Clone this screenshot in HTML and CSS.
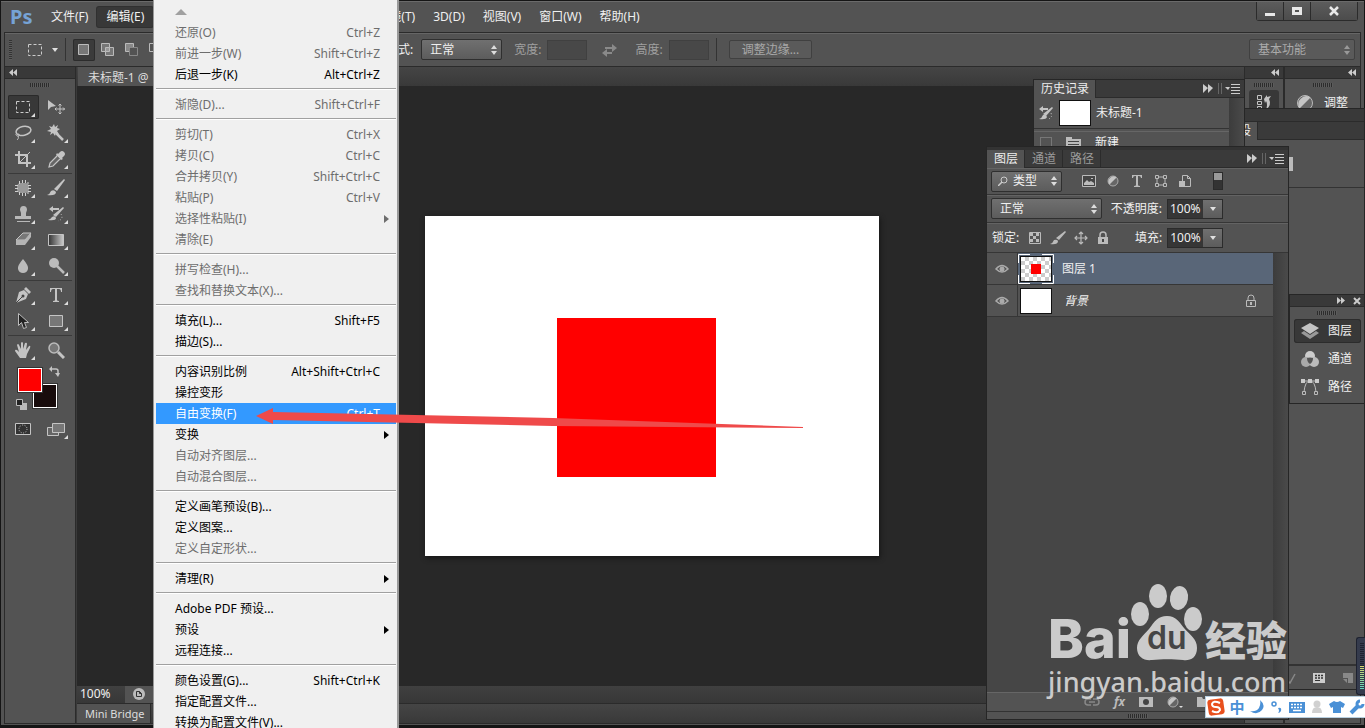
FILE: index.html
```
<!DOCTYPE html>
<html lang="zh-CN">
<head>
  <meta charset="UTF-8">
  <meta name="viewport" content="width=device-width, initial-scale=1.0">
  <title>Photoshop</title>
  <link rel="stylesheet" href="styles.css">
</head>
<body>
  <div class="app">
    <!-- Menu bar -->
    <header class="menubar">
      <span class="logo">Ps</span>
      <nav class="menus">
        <button class="menu-btn">文件(F)</button>
        <button class="menu-btn active">编辑(E)</button>
      </nav>
      <nav class="menus menus-rest">
        <button class="menu-btn">滤镜(T)</button>
        <button class="menu-btn">3D(D)</button>
        <button class="menu-btn">视图(V)</button>
        <button class="menu-btn">窗口(W)</button>
        <button class="menu-btn">帮助(H)</button>
      </nav>
      <div class="win-btns">
        <button class="win-btn" aria-label="最小化"><svg width="12" height="12"><path d="M1 8h10v3H1z" fill="#e8e8e8"/></svg></button>
        <button class="win-btn" aria-label="最大化"><svg width="12" height="12"><path d="M2.500 3.500h7v5h-7z" fill="none" stroke="#e8e8e8" stroke-width="3"/></svg></button>
        <button class="win-btn wide" aria-label="关闭"><svg width="12" height="12"><path d="M2 2l8 8M10 2l-8 8" stroke="#e8e8e8" stroke-width="2.500"/></svg></button>
      </div>
    </header>

    <!-- Options bar -->
    <div class="options">
      <span class="vgrip"></span>
      <svg class="opt-tool" width="16" height="16"><path d="M1.500 2.500h13v11h-13z" fill="none" stroke="#ccc" stroke-dasharray="3 2"/></svg>
      <svg class="opt-caret" width="6" height="4"><path d="M0 0h6l-3 4z" fill="#e0e0e0"/></svg>
      <span class="divider"></span>
      <div class="sel-modes">
        <button class="mode active" aria-label="新选区"><svg width="14" height="14"><path d="M1.500 1.500h10v10h-10z" fill="#777" stroke="#bbb"/></svg></button>
        <button class="mode" aria-label="添加到选区"><svg width="14" height="14"><path d="M.5.5h8v4h4v8h-8v-4h-4z" fill="#777" stroke="#bbb"/><path d="M4.500 8.500v-4h4v4z" fill="#999" stroke="#bbb"/></svg></button>
        <button class="mode" aria-label="从选区减去"><svg width="14" height="14"><path d="M.5.5h8v4h-4v4h-4z" fill="#888" stroke="#bbb"/><path d="M4.500 4.500h8v8h-8z" fill="none" stroke="#888"/></svg></button>
        <button class="mode" aria-label="与选区交叉"><svg width="14" height="14"><path d="M.5.5h8v8h-8z" fill="none" stroke="#bbb"/><path d="M4.500 4.500h8v8h-8z" fill="none" stroke="#bbb"/></svg></button>
      </div>
      <div class="opt-fields">
        <label for="style">样式:</label>
        <select id="style" class="select style-select"><option>正常</option></select>
        <label for="w" class="dim">宽度:</label>
        <input id="w" class="opt-input" type="text" disabled>
        <svg class="swap" width="16" height="14"><path d="M4 4h7V1l5 4-5 4V6H4z" fill="#8a8a8a"/><path d="M11 9H6V6l-5 4 5 4v-3h5z" fill="#8a8a8a"/></svg>
        <label for="h" class="dim">高度:</label>
        <input id="h" class="opt-input" type="text" disabled>
        <span class="divider"></span>
        <button class="refine" disabled>调整边缘...</button>
      </div>
      <select class="select workspace-select" aria-label="工作区"><option>基本功能</option></select>
    </div>

    <div class="workspace">
      <!-- Toolbox -->
      <aside class="toolbox">
        <div class="dock-head left"><svg width="8" height="7"><path d="M4 0v7L0 3.500zM8 0v7L4 3.500z" fill="#ccc"/></svg></div>
        <span class="grip"></span>
        <div class="tools">
          <button class="tool more active" aria-label="矩形选框"><svg width="18" height="18"><path d="M2.500 3.500h13v11h-13z" fill="none" stroke="#ccc" stroke-dasharray="3 2"/></svg></button>
          <button class="tool" aria-label="移动"><svg width="18" height="18"><path d="M1 2l8 6-5 1-3 3z" fill="#c4c4c4"/><path d="M13 6v10M8 11h10M11.500 7.500L13 6l1.500 1.500M11.500 14.500L13 16l1.500-1.500M9.500 9.500L8 11l1.500 1.500M16 9.500l1.500 1.500-1.500 1.500" fill="none" stroke="#c4c4c4"/></svg></button>
          <button class="tool more" aria-label="套索"><svg width="18" height="18"><ellipse cx="9.500" cy="7" rx="7.500" ry="4.500" fill="none" stroke="#c4c4c4" stroke-width="1.500" transform="rotate(-12 9 7)"/><path d="M3 9c-2 1-1 3 1 3s2-2 0-2M4 12c1 2 0 3-1 4" fill="none" stroke="#c4c4c4"/></svg></button>
          <button class="tool more" aria-label="魔棒"><svg width="18" height="18"><path d="M7 0l1 3 3-2-1 3 3 1-3 2 2 3-3-1-1 3-2-3-3 2 1-3-4-1 4-2-2-3 3 1z" fill="#c4c4c4"/><path d="M9 9l7 7" stroke="#c4c4c4" stroke-width="2.500"/></svg></button>
          <button class="tool more" aria-label="裁剪"><svg width="18" height="18"><path d="M5 1v12h12M1 5h12v12" fill="none" stroke="#c4c4c4" stroke-width="2"/><path d="M6 12L16 2" stroke="#c4c4c4"/></svg></button>
          <button class="tool more" aria-label="吸管"><svg width="18" height="18"><path d="M11 4l2-2q2-2 4 0t0 4l-2 2 1 1-2 1-5-5 1-2z" fill="#c4c4c4"/><path d="M10 6l-7 7-1 4 4-1 7-7" fill="#666" stroke="#c4c4c4" stroke-width="1.200"/></svg></button>
          <hr class="tool-sep">
          <button class="tool more" aria-label="修复画笔"><svg width="18" height="18"><rect x="3" y="4" width="12" height="10" rx="4" fill="#999"/><path d="M5.500 2v3M8.500 1v3M11.500 1v3M14 3v2M5.500 13v3M8.500 14v3M11.500 14v3M14 13v2M1 6.500h3M1 9.500h3M1 12.500h3M14 6.500h3M14 9.500h3M14 12.500h3" stroke="#d0d0d0"/></svg></button>
          <button class="tool more" aria-label="画笔"><svg width="18" height="18"><path d="M17 0l1 1-8 11-3-2z" fill="#c4c4c4"/><path d="M0 16q3-1 4-4 3-2 5 1 0 4-9 3z" fill="#c4c4c4"/></svg></button>
          <button class="tool more" aria-label="图章"><svg width="18" height="18"><path d="M7 8l-1-3q0-4 3.500-4T13 5l-1 3v3h5v3H1v-3h6zM3 16h13v1H3z" fill="#b8b8b8"/></svg></button>
          <button class="tool more" aria-label="历史画笔"><svg width="18" height="18"><path d="M16 2l1 1-8 9-3-2z" fill="#c4c4c4"/><path d="M1 15q3-1 4-3 3-2 4 1 0 3-8 2z" fill="#c4c4c4"/><path d="M2 4l4-3v2h6v2H6v2z" fill="#c4c4c4"/><path d="M14 9q3 5-3 7" fill="none" stroke="#c4c4c4" stroke-dasharray="1 2"/></svg></button>
          <button class="tool more" aria-label="橡皮擦"><svg width="18" height="18"><path d="M9 2h8l-6 7H2z" fill="#777" stroke="#c4c4c4"/><path d="M2 9h9v5H2zM11 9l6-7v4l-6 8z" fill="#b4b4b4"/></svg></button>
          <button class="tool more" aria-label="渐变"><svg width="18" height="18"><defs><linearGradient id="gr"><stop offset="0" stop-color="#333"/><stop offset="1" stop-color="#ccc"/></linearGradient></defs><path d="M1.500 3.500h15v11h-15z" fill="url(#gr)" stroke="#c4c4c4"/></svg></button>
          <button class="tool more" aria-label="模糊"><svg width="18" height="18"><path d="M9 2q6 7 5 10-1 4-5 4t-5-4Q3 9 9 2z" fill="#bbb"/></svg></button>
          <button class="tool more" aria-label="减淡"><svg width="18" height="18"><circle cx="7" cy="6" r="5" fill="#bbb"/><path d="M10 9l7 7" stroke="#bbb" stroke-width="2.500"/></svg></button>
          <hr class="tool-sep">
          <button class="tool more" aria-label="钢笔"><svg width="18" height="18"><path d="M12 1l5 5-2 2-5-5z" fill="#c4c4c4"/><path d="M10 4l4 4-2 5-10 4L5 6z" fill="#c4c4c4"/><path d="M2 17l6-6" stroke="#444"/><circle cx="9" cy="10" r="1.500" fill="#444"/></svg></button>
          <button class="tool more" aria-label="文字"><svg width="18" height="18"><path d="M3 2h12v4h-1q0-3-2-3h-2v11q0 1 2 1v1H6v-1q2 0 2-1V3H6Q4 3 4 6H3z" fill="#c4c4c4"/></svg></button>
          <button class="tool more" aria-label="路径选择"><svg width="18" height="18"><path d="M4.500 1.500v12l3-3 2 6 3-1-2-5h4z" fill="#222" stroke="#bbb"/></svg></button>
          <button class="tool more" aria-label="矩形"><svg width="18" height="18"><path d="M2.500 3.500h13v11h-13z" fill="#777" stroke="#c4c4c4"/></svg></button>
          <hr class="tool-sep">
          <button class="tool more" aria-label="抓手"><svg width="18" height="18"><path d="M6 17L1 10q0-2 2-1l2 2L3 4q1-2 2 0l2 4V2q1-2 2 0v6l2-6q2-1 2 1l-1 6 3-4q2-1 1 2l-3 6-1 4z" fill="#c4c4c4"/></svg></button>
          <button class="tool" aria-label="缩放"><svg width="18" height="18"><circle cx="7" cy="7" r="5" fill="#777" stroke="#bbb" stroke-width="1.500"/><path d="M11 11l6 6" stroke="#c4c4c4" stroke-width="3"/></svg></button>
        </div>
        <div class="swatches">
          <span class="swatch bg"></span>
          <span class="swatch fg"></span>
          <svg class="switch" width="11" height="11"><path d="M2 3h5q2 0 2 2v4" fill="none" stroke="#c4c4c4" stroke-width="1.500"/><path d="M0 3l3-3v6zM6 7h5l-2 4z" fill="#c4c4c4"/></svg>
          <svg class="default" width="11" height="11"><path d="M4 4h7v7H4z" fill="#bbb"/><path d="M.5.5h6v6h-6z" fill="#222" stroke="#bbb"/></svg>
        </div>
        <div class="tools modes">
          <button class="tool" aria-label="快速蒙版"><svg width="18" height="18"><path d="M1.500 3.500h15v11h-15z" fill="#333" stroke="#c4c4c4"/><circle cx="9" cy="9" r="4" fill="none" stroke="#ccc" stroke-dasharray="1 1.500"/></svg></button>
          <button class="tool more" aria-label="屏幕模式"><svg width="18" height="18"><path d="M.5 7.500h11v8H.5z" fill="#666" stroke="#c4c4c4"/><path d="M5.500 3.500h12v9h-12z" fill="#777" stroke="#c4c4c4"/></svg></button>
        </div>
      </aside>

      <!-- Document -->
      <main class="document">
        <div class="doc-tabs"><span class="doc-tab">未标题-1 @</span></div>
        <div class="stage">
          <div class="canvas"><div class="red-box"></div></div>
        </div>
        <div class="status">
          <span class="zoom">100%</span>
          <svg class="status-icon" width="12" height="12"><circle cx="6" cy="6" r="6" fill="#bbb"/><path d="M3.500 3.500h3l2 2v3h-5zM6.500 3.500v2h2" fill="none" stroke="#333"/></svg>
        </div>
        <div class="bottom-tabs"><span class="bridge-tab">Mini Bridge</span></div>
      </main>

      <!-- Collapsed dock -->
      <aside class="dock">
        <div class="dock-col narrow">
          <div class="dock-head"><svg width="8" height="7"><path d="M4 0v7L0 3.500zM8 0v7L4 3.500z" fill="#ccc"/></svg></div>
          <span class="grip"></span>
          <button class="dock-btn active" aria-label="历史记录"><svg width="16" height="16"><path d="M1.500.5h4v4h-4zM1.500 6.500h4v3h-4zM1.500 11.500h4v4h-4z" fill="none" stroke="#c4c4c4"/><path d="M8 4l3-4v2l4-1-2 3q3 6-3 11 2-6 0-9l-1 2z" fill="#c4c4c4"/></svg></button>
        </div>
        <div class="dock-col">
          <div class="dock-head"><svg width="8" height="7"><path d="M4 0v7L0 3.500zM8 0v7L4 3.500z" fill="#ccc"/></svg></div>
          <span class="grip"></span>
          <button class="dock-btn"><svg width="18" height="18"><circle cx="9" cy="9" r="7.500" fill="#666" stroke="#bbb"/><path d="M3.500 14.500l11-11A8 8 0 0 0 3.500 14.500z" fill="#c4c4c4"/></svg>调整</button>
        </div>
      </aside>
    </div>
  </div>

  <!-- Presets window -->
  <section class="window presets">
    <div class="window-cap"></div>
    <div class="tabs"><button class="tab active">预设</button></div>
    <div class="presets-top"><span class="preset-slot"></span></div>
    <div class="presets-body"></div>
    <div class="presets-foot">
      <svg width="10" height="12"><path d="M1 8l3 3 5-9" fill="none" stroke="#888" stroke-width="1.500"/></svg>
      <svg width="12" height="12"><path d="M0 1h12v10H0z" fill="#ccc"/><path d="M2 3.500h8M2 6h8" stroke="#333" stroke-width="1.500" stroke-dasharray="2 1"/><path d="M2 8.500h5" stroke="#333"/></svg>
      <svg width="12" height="12"><path d="M1 1h10v10H6V6H1z" fill="#888"/><path d="M1 7l4 4V7z" fill="#888"/></svg>
    </div>
  </section>

  <!-- History window -->
  <section class="window history">
    <div class="tabs">
      <button class="tab active">历史记录</button>
      <span class="tabs-end"><svg width="22" height="11"><path d="M0 1l5 4-5 5zM5 1l5 4-5 5z" fill="#ccc"/><path d="M15.500 0v11M18.500 0v11" stroke="#666"/></svg><svg width="16" height="10"><path d="M0 3h5L3 6z" fill="#ccc"/><path d="M6 .5h9M6 3.500h9M6 6.500h9M6 9.500h9" stroke="#ccc"/></svg></span>
    </div>
    <div class="scroll-body">
      <div class="history-list">
        <div class="snapshot">
          <svg width="16" height="16"><path d="M14 2l1 1-7 8-3-2z" fill="#c4c4c4"/><path d="M1 14q3-1 4-4 3-1 4 2-1 3-8 2z" fill="#c4c4c4"/><path d="M1 4l4-3v2h5v2H5v2z" fill="#c4c4c4"/><path d="M13 8q2 5-3 6" fill="none" stroke="#c4c4c4" stroke-dasharray="1 2"/></svg>
          <span class="snap-thumb"></span>
          <span>未标题-1</span>
        </div>
        <div class="state">
          <span class="state-box"></span>
          <svg width="15" height="15"><path d="M0 2h6v2h9v11H0z" fill="#bbb"/><path d="M2 6.500h11M2 9.500h11M2 12.500h11" stroke="#444"/></svg>
          <span>新建</span>
        </div>
      </div>
      <span class="scrollbar"></span>
    </div>
  </section>

  <!-- Layers window -->
  <section class="window layers">
    <div class="window-top"></div>
    <div class="tabs">
      <button class="tab active">图层</button>
      <button class="tab">通道</button>
      <button class="tab">路径</button>
      <span class="tabs-end"><svg width="22" height="11"><path d="M0 1l5 4-5 5zM5 1l5 4-5 5z" fill="#ccc"/><path d="M15.500 0v11M18.500 0v11" stroke="#666"/></svg><svg width="16" height="10"><path d="M0 3h5L3 6z" fill="#ccc"/><path d="M6 .5h9M6 3.500h9M6 6.500h9M6 9.500h9" stroke="#ccc"/></svg></span>
    </div>
    <div class="layer-row kind-row">
      <select class="select kind-select" aria-label="筛选"><option>类型</option></select>
      <div class="filters">
        <svg width="14" height="14"><path d="M.5 1.500h13v11H.5z" fill="#444" stroke="#bbb"/><path d="M2 11V9l3-3 2 2 2-1 3 2v2z" fill="#bbb"/><path d="M9 4h2v1H9z" fill="#bbb"/></svg>
        <svg width="14" height="14"><circle cx="7" cy="7" r="5" fill="#666" stroke="#aaa"/><path d="M3.500 10.500l7-7A5 5 0 0 0 3.500 10.500z" fill="#c4c4c4"/></svg>
        <svg width="14" height="14"><path d="M2 1h10v3h-1q0-2-2-2H8v9q0 1 2 1v1H4v-1q2 0 2-1V2H5Q3 2 3 4H2z" fill="#bbb"/></svg>
        <svg width="14" height="14"><path d="M3 3h8v8H3z" fill="none" stroke="#bbb"/><path d="M1.500 1.500h3v3h-3zM9.500 1.500h3v3h-3zM1.500 9.500h3v3h-3zM9.500 9.500h3v3h-3z" fill="#555" stroke="#bbb"/></svg>
        <svg width="14" height="14"><path d="M4.500 1.500h5l3 3v8h-8zM9.500 1.500v3h3" fill="none" stroke="#bbb"/><path d="M1 7h6v6H1z" fill="#bbb"/></svg>
      </div>
      <span class="filter-switch"></span>
    </div>
    <div class="layer-row">
      <select class="select blend-select" aria-label="混合模式"><option>正常</option></select>
      <label for="opacity" class="pct-label">不透明度:</label>
      <span class="pct"><input id="opacity" type="text" value="100%"><button aria-label="不透明度滑块"><svg width="6" height="4"><path d="M0 0h6l-3 4z" fill="#e0e0e0"/></svg></button></span>
    </div>
    <div class="layer-row lock-row">
      <span>锁定:</span>
      <div class="locks">
        <svg width="14" height="14"><path d="M1.500 1.500h11v11h-11z" fill="#555" stroke="#bbb"/><path d="M2 2h3v3H2zM8 2h3v3H8zM5 5h3v3H5zM2 8h3v3H2zM8 8h3v3H8z" fill="#bbb"/></svg>
        <svg width="16" height="14"><path d="M15 0l1 1-7 8-3-2z" fill="#bbb"/><path d="M0 13q3-1 4-4 3-1 4 1 0 4-8 3z" fill="#bbb"/></svg>
        <svg width="14" height="14"><path d="M7 1v12M1 7h12M5 3l2-2 2 2M5 11l2 2 2-2M3 5L1 7l2 2M11 5l2 2-2 2" fill="none" stroke="#bbb" stroke-width="1.200"/></svg>
        <svg width="14" height="14"><path d="M4 7V4q0-3 3-3t3 3v3" fill="none" stroke="#bbb" stroke-width="1.500"/><path d="M2 6h10v7H2z" fill="#bbb"/><path d="M6 8h2v3H6z" fill="#444"/></svg>
      </div>
      <label for="fill" class="pct-label">填充:</label>
      <span class="pct"><input id="fill" type="text" value="100%"><button aria-label="填充滑块"><svg width="6" height="4"><path d="M0 0h6l-3 4z" fill="#e0e0e0"/></svg></button></span>
    </div>
    <div class="scroll-body grow">
      <div class="layer-list">
        <div class="layer selected">
          <button class="eye" aria-label="可见性"><svg width="14" height="10"><path d="M1 5q6-7 12 0-6 6-12 0z" fill="none" stroke="#aaa" stroke-width="1.500"/><circle cx="7" cy="5" r="2.500" fill="#aaa"/></svg></button>
          <span class="frame"><span class="thumb checker"><span class="thumb-red"></span></span></span>
          <span>图层 1</span>
        </div>
        <div class="layer">
          <button class="eye" aria-label="可见性"><svg width="14" height="10"><path d="M1 5q6-7 12 0-6 6-12 0z" fill="none" stroke="#aaa" stroke-width="1.500"/><circle cx="7" cy="5" r="2.500" fill="#aaa"/></svg></button>
          <span class="frame plain"><span class="thumb"></span></span>
          <em>背景</em>
          <svg class="locked" width="12" height="14"><path d="M3 6V4q0-3 3-3t3 3v2" fill="none" stroke="#bbb"/><path d="M1.500 6.500h9v6h-9z" fill="#555" stroke="#bbb"/><path d="M5 8h2v3H5z" fill="#bbb"/></svg>
        </div>
      </div>
      <span class="scrollbar"></span>
    </div>
    <div class="layer-foot">
      <svg width="16" height="14"><path d="M7 4H4q-3 0-3 3t3 3h3M9 4h3q3 0 3 3t-3 3H9M5 7h6" fill="none" stroke="#888" stroke-width="1.500"/></svg>
      <span class="fx">fx</span>
      <svg width="14" height="14"><path d="M0 2h14v10H0z" fill="#bbb"/><circle cx="7" cy="7" r="3" fill="#444"/></svg>
      <svg width="16" height="14"><circle cx="6" cy="7" r="5" fill="#666" stroke="#aaa"/><path d="M2.500 10.500l7-7A5 5 0 0 0 2.500 10.500z" fill="#c4c4c4"/><path d="M12 11h4l-2 2z" fill="#ddd"/></svg>
      <svg width="14" height="14"><path d="M0 2h5l1 2h8v8H0z" fill="#bbb"/></svg>
    </div>
    <div class="layer-grip"><span class="grip"></span></div>
  </section>

  <!-- Small panel switcher -->
  <section class="window switcher">
    <div class="switch-head">
      <svg width="8" height="7"><path d="M0 0v7l4-3.500zM4 0v7l4-3.500z" fill="#ccc"/></svg>
      <svg width="8" height="8"><path d="M1 1l6 6M7 1L1 7" stroke="#ccc" stroke-width="2"/></svg>
    </div>
    <span class="grip"></span>
    <button class="switch-btn active"><svg width="18" height="18"><path d="M9 1l9 5-9 6-9-6z" fill="#c4c4c4"/><path d="M0 11l3-2 6 4 6-4 3 2-9 6z" fill="#999"/></svg>图层</button>
    <button class="switch-btn"><svg width="18" height="18"><circle cx="9" cy="6" r="5" fill="#ccc"/><circle cx="5" cy="12" r="5" fill="#aaa"/><circle cx="13" cy="12" r="5" fill="#bbb"/><path d="M6 8q3-1 6 0 0 4-3 6-3-2-3-6z" fill="#555"/></svg>通道</button>
    <button class="switch-btn"><svg width="18" height="18"><path d="M3 14Q4 3 9 3t6 11M1 3h16" fill="none" stroke="#bbb"/><path d="M0 1h4v4H0zM7 1h4v4H7zM14 1h4v4h-4z" fill="#ccc"/><path d="M1.500 13.500h3v3h-3zM13.500 13.500h3v3h-3z" fill="#555" stroke="#bbb"/></svg>路径</button>
  </section>

  <!-- Volume meter -->
  <div class="meter"><span class="meter-off"></span><span class="meter-on"></span></div>

  <!-- Edit menu -->
  <div class="dropdown" role="menu">
    <div class="scroll-up"><svg width="12" height="6"><path d="M6 0l6 6H0z" fill="#a0a0a0"/></svg></div>
    <button class="item off">还原(O)<kbd>Ctrl+Z</kbd></button>
    <button class="item off">前进一步(W)<kbd>Shift+Ctrl+Z</kbd></button>
    <button class="item">后退一步(K)<kbd>Alt+Ctrl+Z</kbd></button>
    <hr>
    <button class="item off">渐隐(D)...<kbd>Shift+Ctrl+F</kbd></button>
    <hr>
    <button class="item off">剪切(T)<kbd>Ctrl+X</kbd></button>
    <button class="item off">拷贝(C)<kbd>Ctrl+C</kbd></button>
    <button class="item off">合并拷贝(Y)<kbd>Shift+Ctrl+C</kbd></button>
    <button class="item off">粘贴(P)<kbd>Ctrl+V</kbd></button>
    <button class="item off sub">选择性粘贴(I)</button>
    <button class="item off">清除(E)</button>
    <hr>
    <button class="item off">拼写检查(H)...</button>
    <button class="item off">查找和替换文本(X)...</button>
    <hr>
    <button class="item">填充(L)...<kbd>Shift+F5</kbd></button>
    <button class="item">描边(S)...</button>
    <hr>
    <button class="item">内容识别比例<kbd>Alt+Shift+Ctrl+C</kbd></button>
    <button class="item">操控变形</button>
    <button class="item current">自由变换(F)<kbd>Ctrl+T</kbd></button>
    <button class="item sub">变换</button>
    <button class="item off">自动对齐图层...</button>
    <button class="item off">自动混合图层...</button>
    <hr>
    <button class="item">定义画笔预设(B)...</button>
    <button class="item">定义图案...</button>
    <button class="item off">定义自定形状...</button>
    <hr>
    <button class="item sub">清理(R)</button>
    <hr>
    <button class="item">Adobe PDF 预设...</button>
    <button class="item sub">预设</button>
    <button class="item">远程连接...</button>
    <hr>
    <button class="item">颜色设置(G)...<kbd>Shift+Ctrl+K</kbd></button>
    <button class="item">指定配置文件...</button>
    <button class="item">转换为配置文件(V)...</button>
  </div>

  <!-- Pointer arrow -->
  <svg class="arrow" width="548" height="24"><path d="M0 9L17 1v4l280 6 250 9v1l-250-2L17 13v4z" fill="#ef4a4a"/></svg>

  <!-- Watermark -->
  <div class="watermark">
    <div class="wm-top">
      <span class="wm-bai">Bai</span>
      <span class="wm-paw">
        <svg width="72" height="78" viewBox="0 0 72 78"><g fill="#cbcbcb"><ellipse cx="9" cy="30" rx="9" ry="12"/><ellipse cx="27" cy="12" rx="9" ry="12"/><ellipse cx="48" cy="14" rx="9" ry="12" transform="rotate(10 48 14)"/><ellipse cx="62" cy="35" rx="9" ry="12"/><path d="M36 32c9 0 12 6 17 12 6 7 13 11 13 20 0 10-7 13-14 12-9-1-22-1-31 0-8 1-15-3-15-12 0-8 6-12 12-19 6-8 9-13 18-13z"/></g></svg>
        <span class="wm-du">du</span>
      </span>
      <span class="wm-cn">经验</span>
    </div>
    <div class="wm-url">jingyan.baidu.com</div>
  </div>

  <!-- Input method bar -->
  <div class="ime">
    <svg width="18" height="18"><rect x="1" y="1" width="16" height="16" rx="3" fill="#e8501e" transform="rotate(-8 9 9)"/><path d="M13 5Q6 2 5 6q0 3 4 3t4 3q-2 4-8 1" fill="none" stroke="#fff" stroke-width="2"/></svg>
    <span class="ime-zh">中</span>
    <svg width="16" height="16"><path d="M11 1q6 5 2 10-5 6-12 1 6 1 9-3 2-4 1-8z" fill="#4a90d6"/></svg>
    <svg width="14" height="16"><circle cx="5" cy="5" r="2" fill="none" stroke="#4a90d6" stroke-width="1.500"/><path d="M9 9q4-1 3 3-1 2-3 2 2-2 0-5z" fill="#4a90d6"/></svg>
    <svg width="18" height="16"><path d="M1 3h16v11H1z" fill="#4a90d6"/><path d="M3 5.500h12M3 8.500h12" stroke="#fff" stroke-width="1.500" stroke-dasharray="2 1"/><path d="M5 11.500h8" stroke="#fff" stroke-width="1.500"/></svg>
    <svg width="14" height="16"><circle cx="7" cy="5" r="3.500" fill="#d0d0d0"/><path d="M2 14q0-6 5-6t5 6z" fill="#d0d0d0"/></svg>
    <svg width="16" height="16"><path d="M5 2q3 2 6 0l5 3-2 4-2-1v6H4V8L2 9 0 5z" fill="#4a90d6"/></svg>
    <svg width="16" height="16"><path d="M2 14l7-7" stroke="#4a90d6" stroke-width="4"/><path d="M14 5a3 3 0 1 1-3-3" fill="none" stroke="#4a90d6" stroke-width="3"/></svg>
  </div>
</body>
</html>
```
FILE: styles.css
```
* {
  box-sizing: border-box;
}
body {
  margin: 0;
  height: 100vh;
  position: relative;
  overflow: hidden;
  background-color: #535353;
  color: #f0f0f0;
  font-family: "Noto Sans", "Noto Sans CJK SC", sans-serif;
  font-size: 12px;
  line-height: 16px;
}
button, input, select, kbd {
  font: inherit;
  color: inherit;
}
button {
  background: none;
  border: none;
  padding: 0;
  white-space: nowrap;
}
svg {
  display: block;
  flex: none;
}
.app {
  height: 100vh;
  display: flex;
  flex-direction: column;
  border: 1px solid #151515;
  border-bottom-width: 3px;
  background-color: #535353;
}

/* Menu bar */
.menubar {
  display: flex;
  height: 31px;
  flex: none;
  align-items: center;
  padding: 0 6px 0 9px;
  border-top: 1px solid #6a6a6a;
}
.logo {
  width: 32px;
  color: #76a3d6;
  font-size: 20px;
  line-height: 28px;
  font-weight: bold;
}
.menus {
  display: flex;
}
.menus-rest {
  margin-left: 215px;
}
.menu-btn {
  height: 20px;
  padding: 0 9px;
  border-radius: 2px;
}
.menu-btn.active {
  background-color: #383838;
  box-shadow: 0 0 0 1px #303030;
}
.win-btns {
  display: flex;
  align-self: flex-start;
  margin-left: auto;
  border: 1px solid #2b2b2b;
  border-top: none;
  border-radius: 0 0 3px 3px;
}
.win-btn {
  width: 27px;
  height: 18px;
  display: grid;
  place-items: center;
  background: linear-gradient(#5c5c5c, #4c4c4c);
  border-right: 1px solid #2b2b2b;
}
.win-btn.wide {
  width: 46px;
  border-right: none;
}

/* Options bar */
.options {
  display: flex;
  flex: none;
  align-items: center;
  height: 34px;
  margin: 0 3px;
  padding: 0 5px 0 4px;
  border: 1px solid #2b2b2b;
  border-bottom: none;
  box-shadow: inset 0 1px #666;
}
.vgrip {
  width: 3px;
  height: 20px;
  background: repeating-linear-gradient(#333 0 1px, #5c5c5c 1px 2px);
}
.opt-tool {
  margin-left: 15px;
}
.opt-caret {
  margin-left: 9px;
}
.divider {
  width: 1px;
  height: 23px;
  margin-left: 7px;
  background-color: #333;
}
.sel-modes {
  display: flex;
  gap: 2px;
  margin-left: 7px;
}
.mode {
  width: 22px;
  height: 22px;
  display: grid;
  place-items: center;
  border-radius: 2px;
}
.mode.active {
  background-color: #3b3b3b;
  box-shadow: inset 0 0 0 1px #2c2c2c;
}
.opt-fields {
  display: flex;
  align-items: center;
  margin-left: 219px;
}
.dim {
  color: #a0a0a0;
  margin-left: 12px;
}
.select {
  appearance: none;
  height: 21px;
  padding: 0 20px 0 8px;
  border: 1px solid #2f2f2f;
  border-radius: 2px;
  background: url("data:image/svg+xml,%3Csvg xmlns='http://www.w3.org/2000/svg' width='6' height='10'%3E%3Cpath d='M3 0l3 4H0zM3 10l3-4H0z' fill='%23ddd'/%3E%3C/svg%3E") no-repeat right 4px center, linear-gradient(#707070, #5c5c5c);
}
.style-select {
  width: 81px;
  margin-left: 8px;
}
.opt-input {
  width: 40px;
  height: 20px;
  margin-left: 6px;
  border: 1px solid #404040;
  background-color: #484848;
}
.swap {
  margin: 0 6px 0 14px;
}
.refine {
  height: 19px;
  margin-left: 12px;
  padding: 0 12px;
  border: 1px solid #404040;
  border-radius: 2px;
  background-color: #5a5a5a;
  color: #a8a8a8;
}
.workspace-select {
  width: 106px;
  margin-left: auto;
  color: #aaa;
  border-color: #404040;
  background: url("data:image/svg+xml,%3Csvg xmlns='http://www.w3.org/2000/svg' width='6' height='10'%3E%3Cpath d='M3 0l3 4H0zM3 10l3-4H0z' fill='%23999'/%3E%3C/svg%3E") no-repeat right 4px center, #5a5a5a;
}

/* Workspace */
.workspace {
  flex: 1;
  min-height: 0;
  display: flex;
  margin: 0 3px 1px;
  border: 1px solid #2b2b2b;
}
.toolbox {
  width: 71px;
  flex: none;
  border-right: 1px solid #2b2b2b;
}
.dock-head {
  display: flex;
  height: 12px;
  align-items: center;
  justify-content: flex-end;
  padding: 0 4px;
  background-color: #393939;
  border-bottom: 1px solid #2b2b2b;
}
.dock-head.left {
  justify-content: flex-start;
}
.grip {
  display: block;
  width: 20px;
  height: 4px;
  margin: 4px auto 0;
  background: repeating-linear-gradient(90deg, #2c2c2c 0 1px, #5c5c5c 1px 2px);
}
.tools {
  display: grid;
  grid-template-columns: 31px 31px;
  gap: 0 2px;
  padding: 7px 0 0 3px;
}
.tools.modes {
  padding-top: 5px;
}
.tool {
  position: relative;
  height: 24px;
  margin: 1px 0;
  padding-right: 1px;
  display: grid;
  place-items: center;
  border-radius: 2px;
}
.tool.active {
  background-color: #383838;
  box-shadow: inset 0 0 0 1px #2a2a2a;
}
.tool.more::after {
  content: "";
  position: absolute;
  right: 4px;
  bottom: 2px;
  border: 2px solid transparent;
  border-right-color: #ddd;
  border-bottom-color: #ddd;
}
.tool-sep {
  grid-column: 1 / 3;
  width: 100%;
  height: 1px;
  margin: 1px 0;
  border: none;
  background-color: #3a3a3a;
}
.swatches {
  position: relative;
  height: 48px;
}
.swatch {
  position: absolute;
  width: 26px;
  height: 26px;
  border: 1px solid #333;
  box-shadow: inset 0 0 0 1px #fff;
}
.swatch.fg {
  left: 12px;
  top: 4px;
  background-color: #ff0000;
}
.swatch.bg {
  left: 27px;
  top: 20px;
  background-color: #180c0c;
}
.switch {
  position: absolute;
  left: 44px;
  top: 3px;
}
.default {
  position: absolute;
  left: 11px;
  top: 36px;
}

/* Document */
.document {
  flex: 1;
  min-width: 0;
  display: flex;
  flex-direction: column;
  border-left: 1px solid #3a3a3a;
}
.doc-tabs {
  display: flex;
  height: 19px;
  flex: none;
  background: linear-gradient(#454545, #393939);
  padding-left: 1px;
}
.doc-tab {
  width: 100px;
  padding: 3px 10px 0;
  white-space: nowrap;
  color: #ddd;
  background-color: #535353;
}
.stage {
  flex: 1;
  display: flex;
  align-items: center;
  justify-content: center;
  padding-right: 18px;
  background-color: #282828;
}
.canvas {
  width: 454px;
  height: 340px;
  padding: 102px 132px;
  background-color: #fff;
  box-shadow: 1px 2px 5px #151515;
}
.red-box {
  width: 159px;
  height: 159px;
  background-color: #ff0000;
}
.status {
  display: flex;
  align-items: center;
  height: 17px;
  flex: none;
  padding-left: 3px;
  background: linear-gradient(#404040, #373737);
}
.zoom {
  width: 45px;
  height: 17px;
}
.status-icon {
  width: 28px;
  height: 17px;
  padding: 2px 8px 0;
  background-color: #535353;
}
.bottom-tabs {
  display: flex;
  height: 20px;
  flex: none;
  border-top: 1px solid #2b2b2b;
  background: linear-gradient(#454545, #393939);
}
.bridge-tab {
  width: 74px;
  padding: 2px 8px 0;
  font-size: 11px;
  white-space: nowrap;
  color: #ddd;
  background-color: #535353;
  border-right: 1px solid #2b2b2b;
}

/* Dock */
.dock {
  display: flex;
  gap: 2px;
  flex: none;
  background-color: #2b2b2b;
  border-left: 1px solid #2b2b2b;
}
.dock-col {
  width: 75px;
  background-color: #535353;
}
.dock-col.narrow {
  width: 38px;
}
.dock-btn {
  display: flex;
  align-items: center;
  gap: 10px;
  height: 26px;
  margin: 3px 4px;
  padding: 0 7px;
  border-radius: 3px;
}
.dock-btn.active {
  background-color: #383838;
}

/* Floating windows */
.window {
  position: absolute;
  display: flex;
  flex-direction: column;
  background-color: #535353;
  border: 1px solid #262626;
}
.tabs {
  display: flex;
  height: 18px;
  flex: none;
  background-color: #3a3a3a;
  border-bottom: 1px solid #2b2b2b;
}
.tab {
  padding: 0 6px 0 7px;
  color: #9a9a9a;
  border-right: 1px solid #2b2b2b;
}
.tab.active {
  height: 18px;
  color: #eee;
  background-color: #535353;
}
.tabs-end {
  display: flex;
  align-items: center;
  margin-left: auto;
  padding-right: 3px;
}
.scroll-body {
  display: flex;
}
.scroll-body.grow {
  flex: 1;
}
.scrollbar {
  width: 15px;
  flex: none;
  background: linear-gradient(90deg, #3c3c3c, #4a4a4a);
}
.presets {
  top: 108px;
  right: 0;
  bottom: 38px;
  width: 146px;
}
.window-cap {
  height: 13px;
  background-color: #393939;
  border-bottom: 1px solid #2b2b2b;
}
.presets-top {
  height: 48px;
  padding: 17px 0 0 66px;
  border-bottom: 1px solid #333;
}
.preset-slot {
  display: block;
  width: 7px;
  height: 14px;
  background-color: #bbb;
}
.presets-body {
  flex: 1;
  border-bottom: 1px solid #333;
}
.presets-foot {
  display: flex;
  align-items: center;
  justify-content: space-between;
  height: 24px;
  padding: 0 10px 0 66px;
  border-top: 1px solid #333;
}
.history {
  top: 79px;
  right: 120px;
  width: 212px;
  height: 110px;
}
.history-list {
  flex: 1;
}
.snapshot {
  display: flex;
  align-items: center;
  gap: 5px;
  height: 31px;
  padding-left: 4px;
  border-bottom: 1px solid #333;
}
.snap-thumb {
  width: 32px;
  height: 26px;
  background-color: #fff;
  border: 1px solid #111;
}
.state {
  display: flex;
  align-items: center;
  gap: 14px;
  height: 22px;
  margin-top: 2px;
  padding-left: 6px;
  border-top: 1px solid #666;
}
.state-box {
  width: 12px;
  height: 12px;
  border: 1px solid #777;
}

/* Layers */
.layers {
  top: 146px;
  right: 76px;
  bottom: 8px;
  width: 303px;
}
.window-top {
  height: 3px;
  background-color: #333;
}
.layer-row {
  display: flex;
  align-items: center;
  height: 28px;
  flex: none;
  padding: 0 4px;
  border-bottom: 1px solid #363636;
  box-shadow: inset 0 1px #636363;
}
.kind-row {
  height: 27px;
}
.kind-select {
  width: 71px;
  padding-left: 21px;
  background: url("data:image/svg+xml,%3Csvg xmlns='http://www.w3.org/2000/svg' width='6' height='10'%3E%3Cpath d='M3 0l3 4H0zM3 10l3-4H0z' fill='%23ddd'/%3E%3C/svg%3E") no-repeat right 4px center, url("data:image/svg+xml,%3Csvg xmlns='http://www.w3.org/2000/svg' width='10' height='10'%3E%3Ccircle cx='6' cy='4' r='3' fill='none' stroke='%23ccc'/%3E%3Cpath d='M4 6L0 10' stroke='%23ccc' stroke-width='1.500'/%3E%3C/svg%3E") no-repeat 6px center, linear-gradient(#707070, #5c5c5c);
}
.filters {
  display: flex;
  gap: 10px;
  margin-left: 20px;
}
.filter-switch {
  width: 10px;
  height: 18px;
  margin-left: 21px;
  border: 1px solid #2b2b2b;
  background: linear-gradient(#999 0 45%, #333 45%);
}
.blend-select {
  width: 111px;
}
.pct-label {
  width: 60px;
  text-align: right;
  white-space: nowrap;
}
.pct {
  display: flex;
  width: 56px;
  height: 20px;
  margin-left: 5px;
  border: 1px solid #2b2b2b;
}
.pct input {
  width: 35px;
  padding: 0 2px;
  border: none;
  background-color: #363636;
}
.pct button {
  flex: 1;
  display: grid;
  place-items: center;
  background: linear-gradient(#707070, #5c5c5c);
}
.lock-row {
  height: 30px;
  padding-left: 5px;
}
.locks {
  display: flex;
  gap: 8px;
  width: 74px;
  margin-left: 9px;
}
.layer-list {
  flex: 1;
  background-color: #464646;
}
.layer {
  display: flex;
  align-items: center;
  height: 32px;
  padding-right: 16px;
  background-color: #535353;
  border-bottom: 1px solid #363636;
}
.layer.selected {
  background-color: #596678;
}
.eye {
  width: 31px;
  align-self: stretch;
  display: grid;
  place-items: center;
  background-color: #535353;
  border-right: 1px solid #363636;
}
.frame {
  margin: 0 8px 0 0;
  padding: 2px;
  background: url("data:image/svg+xml,%3Csvg xmlns='http://www.w3.org/2000/svg' width='36' height='30'%3E%3Cpath d='M.5 9V.5H12M24 .5h11.500V9M35.500 21v8.500H24M12 29.500H.5V21' fill='none' stroke='%23fff'/%3E%3C/svg%3E") no-repeat;
}
.frame.plain {
  background: none;
  margin-right: 10px;
}
.thumb {
  width: 32px;
  height: 26px;
  display: grid;
  place-items: center;
  background-color: #fff;
  border: 1px solid #111;
}
.checker {
  background: repeating-conic-gradient(#ccc 0 25%, #fff 0 50%) 0 0 / 8px 8px;
}
.thumb-red {
  width: 10px;
  height: 10px;
  background-color: #ff0000;
}
.locked {
  margin-left: auto;
}
.layer-foot {
  display: flex;
  align-items: center;
  gap: 14px;
  height: 19px;
  flex: none;
  padding-left: 97px;
  border-top: 1px solid #666;
}
.fx {
  font-style: italic;
  font-weight: bold;
  color: #bbb;
}
.layer-grip {
  height: 8px;
  border-top: 1px solid #333;
}
.layer-grip .grip {
  margin-top: 2px;
}

/* Panel switcher */
.switcher {
  top: 294px;
  right: 0;
  width: 76px;
  height: 110px;
}
.switch-head {
  display: flex;
  align-items: center;
  justify-content: flex-end;
  gap: 8px;
  height: 12px;
  padding-right: 3px;
  background-color: #393939;
  border-bottom: 1px solid #2b2b2b;
}
.switcher .grip {
  margin-bottom: 4px;
}
.switch-btn {
  display: flex;
  align-items: center;
  gap: 9px;
  height: 24px;
  margin: 0 3px 4px 4px;
  padding: 0 7px;
  border-radius: 3px;
}
.switch-btn.active {
  background-color: #383838;
  box-shadow: inset 0 0 0 1px #2c2c2c;
}
.meter {
  position: absolute;
  right: 0;
  bottom: 33px;
  width: 9px;
  height: 58px;
  padding: 5px 1px 5px 3px;
  background-color: #353b4d;
  border: 1px solid #1e2230;
  border-right: none;
  border-radius: 3px 0 0 3px;
}
.meter-off, .meter-on {
  display: block;
  height: 23px;
  background: repeating-linear-gradient(#1e2230 0 1px, #353b4d 1px 2px);
}
.meter-on {
  background: repeating-linear-gradient(transparent 0 1px, #353b4d 1px 2px), linear-gradient(#d8d870, #60d8c0);
}

/* Edit menu */
.dropdown {
  position: absolute;
  left: 153px;
  top: 0;
  bottom: 0;
  width: 246px;
  padding: 0 1px 0 2px;
  overflow: hidden;
  background-color: #f0f0f0;
  border-left: 1px solid #999;
  border-right: 2px solid #999;
  color: #000;
}
.dropdown hr {
  height: 2px;
  margin: 3px 0 4px;
  border: none;
  border-top: 1px solid #a0a0a0;
  background-color: #fff;
}
.scroll-up {
  height: 22px;
  padding: 9px 0 0 19px;
}
.item {
  display: flex;
  align-items: center;
  width: 100%;
  height: 21px;
  padding: 0 16px 0 19px;
}
.item kbd {
  margin-left: auto;
}
.item.off {
  color: #6d6d6d;
}
.item.current {
  background-color: #3399ff;
  color: #fff;
}
.item.sub {
  padding-right: 7px;
}
.item.sub::after {
  content: "";
  margin-left: auto;
  border: 4px solid transparent;
  border-left: 5px solid;
  border-right: none;
}
.arrow {
  position: absolute;
  left: 256px;
  top: 407px;
}

/* Watermark */
.watermark {
  position: absolute;
  right: 78px;
  bottom: 26px;
  color: #cbcbcb;
}
.wm-top {
  display: flex;
  align-items: flex-end;
  height: 78px;
}
.wm-bai {
  font-family: Inter, sans-serif;
  font-weight: 800;
  font-size: 54px;
  line-height: 46px;
}
.wm-paw {
  position: relative;
}
.wm-du {
  position: absolute;
  left: 16px;
  bottom: 8px;
  font-family: Inter, sans-serif;
  font-weight: 600;
  font-size: 32px;
  line-height: 32px;
  color: #464646;
}
.wm-cn {
  margin-left: 2px;
  font-weight: 900;
  font-size: 41px;
  line-height: 44px;
}
.wm-url {
  font-size: 27px;
  font-weight: 500;
  line-height: 40px;
}

/* Input method bar */
.ime {
  position: absolute;
  right: 0;
  bottom: 10px;
  width: 160px;
  height: 22px;
  display: flex;
  align-items: center;
  justify-content: space-between;
  padding: 0 0 0 1px;
  background-color: #fff;
  border: 1px solid #b8cfe0;
  border-right: none;
}
.ime-zh {
  color: #4a90d6;
  font-size: 15px;
  font-weight: bold;
}
```
